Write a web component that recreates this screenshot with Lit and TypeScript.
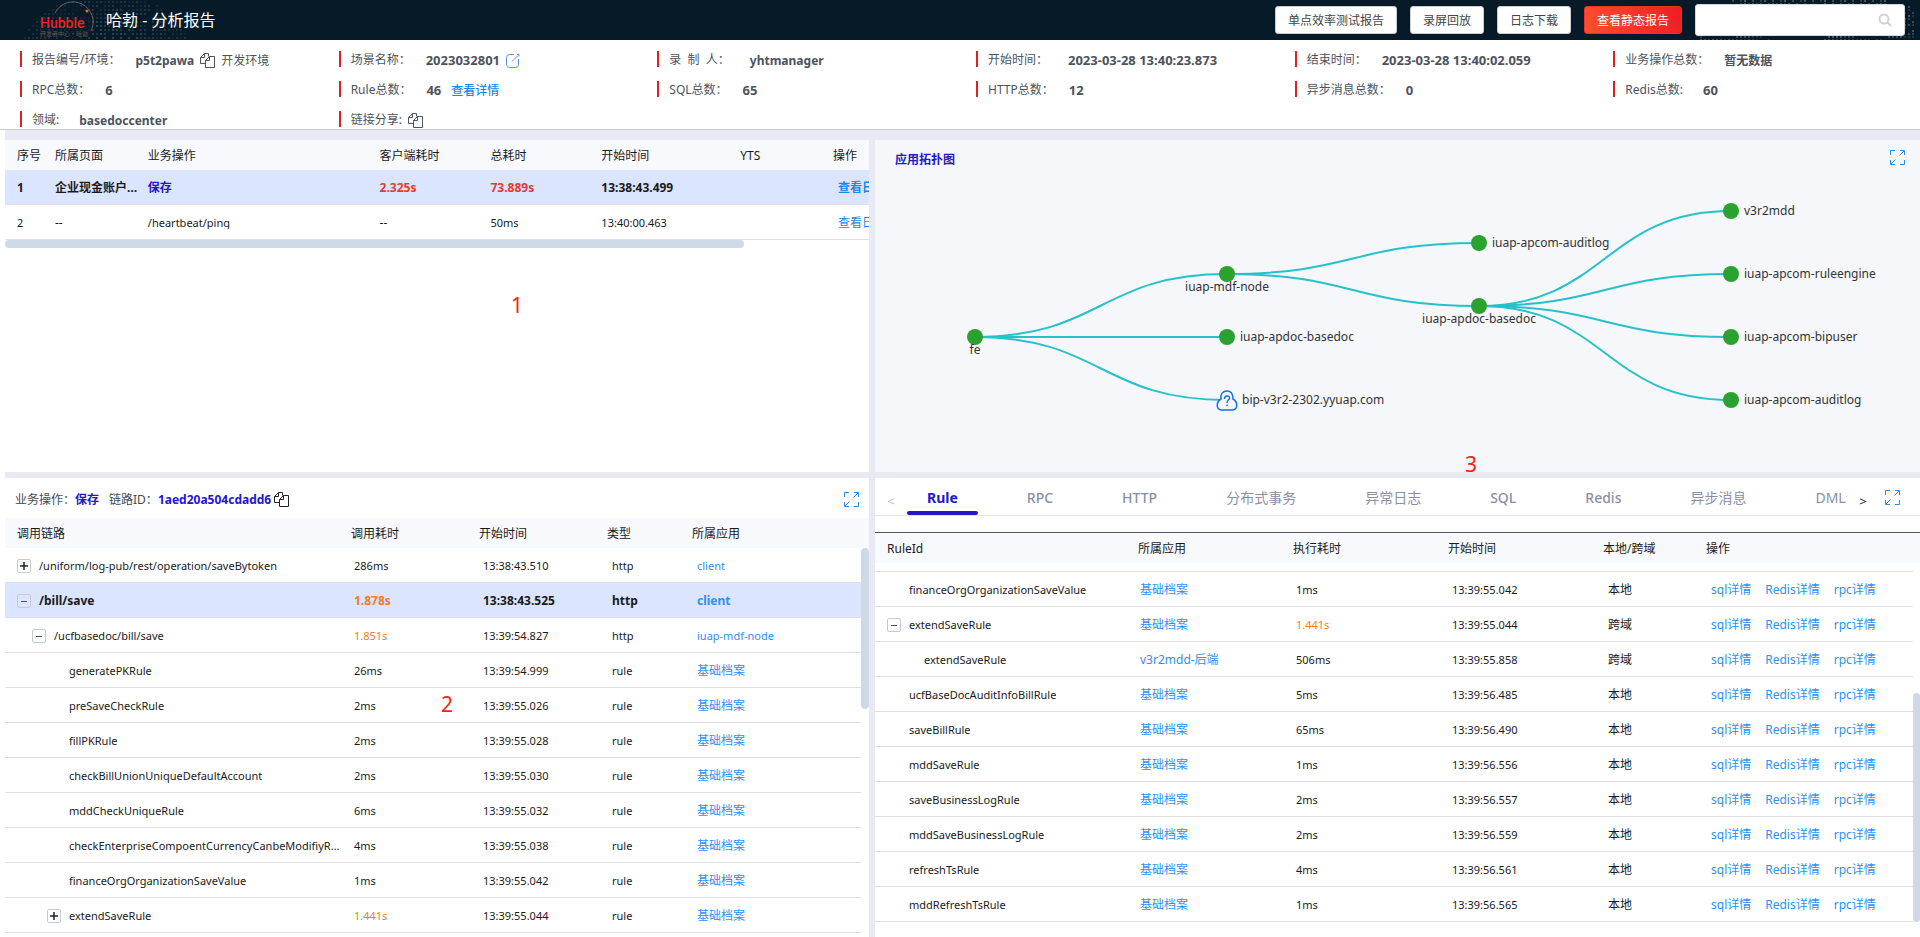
import { LitElement, html, svg, css } from "lit";
import { customElement, state } from "lit/decorators.js";
import { classMap } from "lit/directives/class-map.js";

const base = css`
  * { box-sizing: border-box; }
  button, input { font: inherit; color: inherit; margin: 0; padding: 0; border: 0; background: none; }
  button { cursor: pointer; }
  a { color: #2b91f5; text-decoration: none; }
  svg { display: block; flex: none; }
`;

const tableStyles = css`
  table, thead, tbody { display: block; }
  tr { display: grid; }
  th, td {
    min-width: 0;
    padding: 2px 0 0 12px;
    text-align: left;
    font-weight: 400;
    white-space: nowrap;
    overflow: hidden;
    text-overflow: ellipsis;
  }
  thead tr { height: 30px; line-height: 28px; background: #f7f9fd; }
  tbody tr { height: 35px; line-height: 32px; border-bottom: 1px solid #dcdfe3; }
  .latin { font-size: 11px; }
  tr.active { background: #dbe5ff; }
  tr.active td { font-weight: 700; }
  tr.active .latin { font-size: 12px; }
  .slow { color: #f97b1c; }
  .thumb { position: absolute; background: #cdd9e7; border-radius: 4px; }
`;

const copyIcon = () => html`<svg width="15" height="15" viewBox="0 0 15 15" fill="none" stroke="currentColor" stroke-width="1">
  <path d="M5 10.5H.5v-6l4-4h4v3M4.500.5v4h-4" />
  <path d="M5.5 14.500v-7l4-4h5v11zM9.500 3.500v4h-4" />
</svg>`;

const editIcon = () => html`<svg width="14" height="15" viewBox="0 0 14 15" fill="none" stroke="#5b8def" stroke-width="1">
  <path d="M8 1.500H3.500a3 3 0 0 0-3 3v7a3 3 0 0 0 3 3h6a3 3 0 0 0 3-3V6" />
  <path d="M6 8.500L12 2.500" />
  <path d="M11 1.500h2v2" />
</svg>`;

const expandIcon = () => html`<svg width="15" height="15" viewBox="0 0 15 15" fill="none" stroke="#2b8ae6" stroke-width="1">
  <path d="M.5 5V.5H5M14.500 10v4.500H10M9.500 5.500L14 1M10 .5h4.500V5M5.500 9.500L1 14M.5 10v4.500H5" />
</svg>`;

const toggle = (kind: "+" | "-") => html`<button class="toggle" aria-label=${kind === "+" ? "展开" : "收起"}>
  <svg width="12" height="12" viewBox="0 0 12 12" stroke=${kind === "+" ? "#222" : "#4a5260"} stroke-width=${kind === "+" ? 1.5 : 1}>
    <path d=${kind === "+" ? "M2 6h8M6 2v8" : "M3 6.500h6"} />
  </svg>
</button>`;

const treeStyles = css`
  .tree { display: flex; align-items: center; gap: 8px; }
  .tree .name { min-width: 0; overflow: hidden; text-overflow: ellipsis; }
  .toggle {
    display: flex; flex: none; align-items: center; justify-content: center;
    width: 14px; height: 14px; border: 1px solid #c6cbd3; border-radius: 2px;
  }
  .blank { flex: none; width: 14px; }
  .indent1 { padding-left: 27px; }
  .indent2 { padding-left: 42px; }
`;

@customElement("hubble-logo")
class HubbleLogo extends LitElement {
  static styles = css`
    :host { display: block; }
    svg { display: block; }
    .word { font: 500 14px Roboto, sans-serif; fill: #ea2420; }
    .sub { font: 6px "Noto Sans CJK SC", sans-serif; fill: #6b5552; }
  `;
  render() {
    const dots = [];
    for (let y = 1; y < 40; y += 4) {
      for (let x = 20; x < 190; x += 4) {
        const d = Math.hypot((x - 105) / 82, (y - 44) / 50);
        const hole = (x * 7 + y * 13 + ((x * y) % 11)) % 5;
        if (d < 1 && hole > 0) dots.push(svg`<rect x=${x} y=${y} width="2" height="2" opacity=${(0.16 * (1.2 - d) + 0.03 * hole).toFixed(2)} />`);
      }
    }
    return html`<svg width="190" height="40" viewBox="0 0 190 40">
      <g fill="#a9bccb">${dots}</g>
      <circle cx="72" cy="24" r="20" fill="#061a28" fill-opacity=".6" />
      <path d="M55 13a20 20 0 0 1 36 18" fill="none" stroke="#6b6463" stroke-width="1" />
      <circle cx="87" cy="11" r="1.5" fill="#f0642c" />
      <text class="word" x="40" y="28">Hubble</text>
      <text class="sub" x="40" y="36">开发者中心·哈勃</text>
    </svg>`;
  }
}

type GNode = { x: number; y: number; label: string; below?: boolean; cloud?: boolean };
const NODES: GNode[] = [
  { x: 100, y: 197, label: "fe", below: true },
  { x: 352, y: 134, label: "iuap-mdf-node", below: true },
  { x: 352, y: 197, label: "iuap-apdoc-basedoc" },
  { x: 352, y: 260, label: "bip-v3r2-2302.yyuap.com", cloud: true },
  { x: 604, y: 103, label: "iuap-apcom-auditlog" },
  { x: 604, y: 166, label: "iuap-apdoc-basedoc", below: true },
  { x: 856, y: 71, label: "v3r2mdd" },
  { x: 856, y: 134, label: "iuap-apcom-ruleengine" },
  { x: 856, y: 197, label: "iuap-apcom-bipuser" },
  { x: 856, y: 260, label: "iuap-apcom-auditlog" },
];
const EDGES = [[0, 1], [0, 2], [0, 3], [1, 4], [1, 5], [5, 6], [5, 7], [5, 8], [5, 9]];

@customElement("topology-panel")
class TopologyPanel extends LitElement {
  static styles = [base, css`
    :host { display: block; position: relative; background: #f5f7fb; overflow: hidden; }
    .bar { position: absolute; top: 10px; left: 20px; right: 15px; display: flex; justify-content: space-between; align-items: flex-start; }
    h2 { margin: 0; font-size: 12px; line-height: 20px; font-weight: 700; color: #2317c9; }
    .graph { width: 100%; height: 100%; }
    text { font-size: 12px; fill: #333; }
    .mark { position: absolute; left: 590px; bottom: -4px; font-size: 21px; line-height: 24px; color: #ff1e0f; }
  `];
  render() {
    return html`
      <svg class="graph" viewBox="0 0 1045 332" role="img" aria-label="应用拓扑图">
        <g fill="none" stroke="#26c1c9" stroke-width="2">
          ${EDGES.map(([a, b]) => {
            const s = NODES[a], t = NODES[b], m = (s.x + t.x) / 2;
            return svg`<path d="M${s.x} ${s.y}C${m} ${s.y} ${m} ${t.y} ${t.x} ${t.y}" />`;
          })}
        </g>
        ${NODES.map((n) => svg`
          ${n.cloud
            ? svg`<g transform="translate(${n.x} ${n.y})" fill="#f5f7fb" stroke="#1270f5" stroke-width="1.5">
                <path d="M-6 10C-11 9-11 2-6-1C-7-6-4-9 0-9C5-9 6-5 6-1C11 2 11 9 6 10Z" />
                <path fill="none" d="M-2.500 -1C-2.500-5 3-5 2.500-1.500C2 0 0 0 0 3M0 4.500v1.500" />
              </g>`
            : svg`<circle cx=${n.x} cy=${n.y} r="8" fill="#2ba22f" />`}
          ${n.below
            ? svg`<text x=${n.x} y=${n.y + 17} text-anchor="middle">${n.label}</text>`
            : svg`<text x=${n.x + (n.cloud ? 15 : 13)} y=${n.y + 4}>${n.label}</text>`}
        `)}
      </svg>
      <div class="bar"><h2>应用拓扑图</h2><button aria-label="全屏">${expandIcon()}</button></div>
      <span class="mark">3</span>`;
  }
}

@customElement("operations-panel")
class OperationsPanel extends LitElement {
  static styles = [base, tableStyles, css`
    :host { display: block; position: relative; background: #fff; overflow: hidden; }
    table { width: 117%; }
    tr { grid-template-columns: 38fr 97fr 228fr 111fr 111fr 139fr 93fr 195fr; }
    tr .op { padding-left: 8px; }
    tr a { color: #1b87ea; padding-left: 5px; }
    .name { color: #2317c9; }
    .hot { color: #e53935; }
    tr .clip { line-height: 14px; height: 13px; align-self: center; padding-top: 0; }
    .track { position: relative; height: 8px; }
    .thumb { left: 0; top: 0; width: 85.5%; height: 8px; }
    .mark { position: absolute; left: 506px; top: 153px; font-size: 21px; line-height: 24px; color: #ff1e0f; }
  `];
  render() {
    return html`
      <table>
        <thead><tr><th>序号</th><th>所属页面</th><th class="op">业务操作</th><th>客户端耗时</th><th>总耗时</th><th>开始时间</th><th>YTS</th><th>操作</th></tr></thead>
        <tbody>
          <tr class="active"><td>1</td><td>企业现金账户管理</td><td class="op name">保存</td><td class="hot">2.325s</td><td class="hot">73.889s</td><td>13:38:43.499</td><td></td><td><a href="#">查看日志</a></td></tr>
          <tr><td class="latin">2</td><td>--</td><td class="op latin clip">/heartbeat/ping</td><td>--</td><td class="latin">50ms</td><td class="latin">13:40:00.463</td><td></td><td><a href="#">查看日志</a></td></tr>
        </tbody>
      </table>
      <div class="track"><div class="thumb"></div></div>
      <span class="mark">1</span>`;
  }
}

type Call = [string, number, "+" | "-" | "", string, string, string, string];
const CALLS: Call[] = [
  ["/uniform/log-pub/rest/operation/saveBytoken", 0, "+", "286ms", "13:38:43.510", "http", "client"],
  ["/bill/save", 0, "-", "1.878s", "13:38:43.525", "http", "client"],
  ["/ucfbasedoc/bill/save", 1, "-", "1.851s", "13:39:54.827", "http", "iuap-mdf-node"],
  ["generatePKRule", 2, "", "26ms", "13:39:54.999", "rule", "基础档案"],
  ["preSaveCheckRule", 2, "", "2ms", "13:39:55.026", "rule", "基础档案"],
  ["fillPKRule", 2, "", "2ms", "13:39:55.028", "rule", "基础档案"],
  ["checkBillUnionUniqueDefaultAccount", 2, "", "2ms", "13:39:55.030", "rule", "基础档案"],
  ["mddCheckUniqueRule", 2, "", "6ms", "13:39:55.032", "rule", "基础档案"],
  ["checkEnterpriseCompoentCurrencyCanbeModifiyRule", 2, "", "4ms", "13:39:55.038", "rule", "基础档案"],
  ["financeOrgOrganizationSaveValue", 2, "", "1ms", "13:39:55.042", "rule", "基础档案"],
  ["extendSaveRule", 2, "+", "1.441s", "13:39:55.044", "rule", "基础档案"],
];
const isSlow = (t: string) => !t.endsWith("ms");
const isLatin = (t: string) => /^[\x20-\x7e]*$/.test(t);

@customElement("trace-panel")
class TracePanel extends LitElement {
  static styles = [base, tableStyles, treeStyles, css`
    :host { display: block; position: relative; background: #fff; overflow: hidden; }
    .bar { display: flex; align-items: center; height: 40px; padding: 2px 10px 0; color: #444a54; }
    .bar b { color: #2317c9; }
    .bar b + span { margin-left: 10px; }
    .bar .copy { margin-left: 3px; color: #222; }
    .bar .full { margin-left: auto; }
    thead tr { grid-template-columns: 334fr 128fr 128fr 85fr 189fr; }
    tbody { margin-right: 8px; }
    tbody tr { grid-template-columns: minmax(0, 337fr) 129fr 129fr 85fr 176fr; }
    .thumb { right: 0; top: 70px; width: 8px; height: 35%; }
    .mark { position: absolute; left: 436px; top: 214px; font-size: 21px; line-height: 24px; color: #ff1e0f; }
  `];
  render() {
    return html`
      <div class="bar">
        <span>业务操作：</span><b>保存</b><span>链路ID：</span><b>1aed20a504cdadd6</b>
        <button class="copy" aria-label="复制">${copyIcon()}</button>
        <button class="full" aria-label="全屏">${expandIcon()}</button>
      </div>
      <table>
        <thead><tr><th>调用链路</th><th>调用耗时</th><th>开始时间</th><th>类型</th><th>所属应用</th></tr></thead>
        <tbody>
          ${CALLS.map(([name, level, tog, cost, start, type, app], i) => html`
            <tr class=${i === 1 ? "active" : ""}>
              <td class=${classMap({ tree: true, latin: true, indent1: level === 1, indent2: level === 2 })}>
                ${tog ? toggle(tog) : html`<span class="blank"></span>`}<span class="name">${name}</span>
              </td>
              <td class=${classMap({ latin: true, slow: isSlow(cost) })}>${cost}</td>
              <td class="latin">${start}</td><td class="latin">${type}</td>
              <td class=${isLatin(app) ? "latin" : ""}><a href="#">${app}</a></td>
            </tr>`)}
        </tbody>
      </table>
      <div class="thumb"></div>
      <span class="mark">2</span>`;
  }
}

type Rule = [string, number, "-" | "", string, string, string, string];
const RULES: Rule[] = [
  ["financeOrgOrganizationSaveValue", 0, "", "基础档案", "1ms", "13:39:55.042", "本地"],
  ["extendSaveRule", 0, "-", "基础档案", "1.441s", "13:39:55.044", "跨域"],
  ["extendSaveRule", 1, "", "v3r2mdd-后端", "506ms", "13:39:55.858", "跨域"],
  ["ucfBaseDocAuditInfoBillRule", 0, "", "基础档案", "5ms", "13:39:56.485", "本地"],
  ["saveBillRule", 0, "", "基础档案", "65ms", "13:39:56.490", "本地"],
  ["mddSaveRule", 0, "", "基础档案", "1ms", "13:39:56.556", "本地"],
  ["saveBusinessLogRule", 0, "", "基础档案", "2ms", "13:39:56.557", "本地"],
  ["mddSaveBusinessLogRule", 0, "", "基础档案", "2ms", "13:39:56.559", "本地"],
  ["refreshTsRule", 0, "", "基础档案", "4ms", "13:39:56.561", "本地"],
  ["mddRefreshTsRule", 0, "", "基础档案", "1ms", "13:39:56.565", "本地"],
];
const TABS = ["Rule", "RPC", "HTTP", "分布式事务", "异常日志", "SQL", "Redis", "异步消息", "DML语句"];

@customElement("rule-panel")
class RulePanel extends LitElement {
  @state() private active = 0;
  static styles = [base, tableStyles, treeStyles, css`
    :host { display: block; position: relative; background: #fff; overflow: hidden; }
    .bar { display: flex; height: 38px; padding-right: 20px; border-bottom: 1px solid #e4e5ec; }
    .arrow { flex: none; width: 32px; padding-top: 8px; font-size: 13px; color: #222; }
    .arrow:disabled { color: #c0c0c0; }
    .tabs { flex: 1; min-width: 0; display: flex; gap: 29px; overflow: hidden; }
    .tab { position: relative; flex: none; padding: 2px 20px 0; font-size: 14px; line-height: 35px; color: #8990a5; }
    .tab.word { font-weight: 500; }
    .tab.on { color: #2317c9; font-weight: 700; }
    .tab.on::after { content: ""; position: absolute; left: 0; right: 0; bottom: 0; height: 4px; border-radius: 2px; background: #2317c9; }
    .full { padding: 2px 0 0 6px; }
    table { margin-top: 16px; border-top: 1px solid #4d5566; }
    thead tr { grid-template-columns: 251fr 155fr 155fr 155fr 103fr 226fr; }
    tbody { padding-top: 8px; margin-right: 7px; }
    tbody tr { grid-template-columns: minmax(0, 253fr) 156fr 156fr 156fr 103fr 214fr; }
    tbody tr:first-child { height: 36px; border-top: 1px solid #dcdfe3; }
    .links { display: flex; gap: 14px; }
    .thumb { right: 0; bottom: 15px; width: 7px; height: 50%; }
  `];
  render() {
    return html`
      <div class="bar">
        <button class="arrow" disabled aria-label="向前">&lt;</button>
        <div class="tabs" role="tablist">
          ${TABS.map((t, i) => html`<button role="tab" aria-selected=${i === this.active} class=${classMap({ tab: true, word: isLatin(t), on: i === this.active })} @click=${() => (this.active = i)}>${t}</button>`)}
        </div>
        <button class="arrow" aria-label="向后">&gt;</button>
        <button class="full" aria-label="全屏">${expandIcon()}</button>
      </div>
      <table>
        <thead><tr><th>RuleId</th><th>所属应用</th><th>执行耗时</th><th>开始时间</th><th>本地/跨域</th><th>操作</th></tr></thead>
        <tbody>
          ${RULES.map(([name, level, tog, app, cost, start, scope]) => html`
            <tr>
              <td class=${classMap({ tree: true, latin: true, indent1: level === 1 })}>
                ${tog ? toggle(tog) : html`<span class="blank"></span>`}<span class="name">${name}</span>
              </td>
              <td><a href="#">${app}</a></td>
              <td class=${classMap({ latin: true, slow: isSlow(cost) })}>${cost}</td>
              <td class="latin">${start}</td>
              <td>${scope}</td>
              <td class="links"><a href="#">sql详情</a><a href="#">Redis详情</a><a href="#">rpc详情</a></td>
            </tr>`)}
        </tbody>
      </table>
      <div class="thumb"></div>`;
  }
}

@customElement("app-root")
class AppRoot extends LitElement {
  static styles = [base, css`
    :host {
      display: flex; flex-direction: column; height: 100vh; overflow: hidden; background: #fff;
      font-family: "Noto Sans", "Noto Sans CJK SC", sans-serif; font-size: 12px; color: #1a1a1a;
    }
    header { flex: none; position: relative; display: flex; align-items: center; height: 40px; padding-right: 15px; background: #061a28; }
    hubble-logo { margin-right: -84px; }
    h1 { position: relative; margin: 0; font-size: 16px; line-height: 40px; font-weight: 400; color: #fff; }
    .sparks { position: absolute; right: 0; top: 0; }
    .actions { position: relative; margin-left: auto; display: flex; align-items: center; gap: 13px; }
    .btn { height: 28px; padding: 0 12px; border: 1px solid #c9ccd1; border-radius: 3px; background: #fff; color: #444; }
    .btn.primary { border-color: #f2302a; background: linear-gradient(70deg, #ff4f2e, #ee1d23); color: #fff; }
    .search { position: relative; display: block; }
    .search input { display: block; width: 210px; height: 32px; padding: 0 36px 0 10px; border: 1px solid #d5d8dc; border-radius: 3px; background: #fff; outline: 0; color: #333; }
    .search svg { position: absolute; right: 13px; top: 9px; }

    .info { flex: none; display: grid; grid-template-columns: repeat(6, minmax(0, 1fr)); grid-auto-rows: 30px; height: 90px; margin: 0; padding: 5px 4px 0; border-bottom: 1px solid #c9cad2; color: #4d535e; overflow: hidden; }
    .info > div { display: flex; align-items: center; padding-left: 28px; position: relative; white-space: nowrap; }
    .info > div::before { content: ""; position: absolute; left: 16px; top: 6px; width: 2px; height: 16px; background: #e3201f; }
    .info dt { line-height: 30px; }
    .info dd { display: flex; align-items: center; margin: 0 0 0 15px; }
    .info .half { margin-left: 20px; }
    .info .bare { margin-left: 6px; }
    .info .num { font-size: 13px; }
    .info button { margin: 0 6px; }
    .info .bare button { margin: 0; }
    .info a { margin-left: 10px; color: #1b87ea; font-weight: 500; }

    main {
      flex: 1; min-height: 0; display: grid; margin-left: 5px; padding-top: 10px; gap: 6px; background: #e9e9f4;
      grid-template-columns: 45vw minmax(0, 1fr); grid-template-rows: minmax(0, 332fr) minmax(0, 459fr);
    }
  `];

  private field(label: string, value: unknown, cls = "") {
    return html`<div><dt>${label}</dt><dd class=${cls}>${value}</dd></div>`;
  }

  render() {
    const sparks = [];
    for (let y = 0; y < 40; y += 3) {
      for (let x = 5; x < 220; x += 4) {
        const h = (x * 31 + y * 17 + ((x * y) % 23)) % 10;
        const inside = y < 6 ? x > 35 + y * 3 && x < 190 : x < 80 || x > 125;
        if (inside && h > 3) sparks.push(svg`<rect x=${x} y=${y} width="2" height="2" opacity=${(h / 22).toFixed(2)} />`);
      }
    }
    return html`
      <header>
        <hubble-logo></hubble-logo>
        <h1>哈勃 - 分析报告</h1>
        <svg class="sparks" width="225" height="40" fill="#9fb0bd">${sparks}</svg>
        <div class="actions">
          <button class="btn">单点效率测试报告</button>
          <button class="btn">录屏回放</button>
          <button class="btn">日志下载</button>
          <button class="btn primary">查看静态报告</button>
          <label class="search">
            <input type="text" aria-label="搜索" />
            <svg width="14" height="14" viewBox="0 0 14 14" fill="none" stroke="#cfd1d4" stroke-width="2"><circle cx="6" cy="6" r="4.500" /><path d="M9 9l4 4" /></svg>
          </label>
        </div>
      </header>
      <dl class="info">
        ${this.field("报告编号/环境：", html`<b>p5t2pawa</b><button aria-label="复制编号">${copyIcon()}</button>开发环境`)}
        ${this.field("场景名称：", html`<b class="num">2023032801</b><button aria-label="编辑">${editIcon()}</button>`)}
        ${this.field("录\u00a0\u00a0制\u00a0\u00a0人：", html`<b>yhtmanager</b>`, "half")}
        ${this.field("开始时间：", html`<b class="num">2023-03-28 13:40:23.873</b>`, "half")}
        ${this.field("结束时间：", html`<b class="num">2023-03-28 13:40:02.059</b>`)}
        ${this.field("业务操作总数：", html`<b>暂无数据</b>`)}
        ${this.field("RPC总数：", html`<b class="num">6</b>`)}
        ${this.field("Rule总数：", html`<b class="num">46</b><a href="#">查看详情</a>`)}
        ${this.field("SQL总数：", html`<b class="num">65</b>`)}
        ${this.field("HTTP总数：", html`<b class="num">12</b>`)}
        ${this.field("异步消息总数：", html`<b class="num">0</b>`)}
        ${this.field("Redis总数:", html`<b class="num">60</b>`, "half")}
        ${this.field("领域:", html`<b>basedoccenter</b>`, "half")}
        ${this.field("链接分享:", html`<button aria-label="复制链接">${copyIcon()}</button>`, "bare")}
      </dl>
      <main>
        <operations-panel></operations-panel>
        <topology-panel></topology-panel>
        <trace-panel></trace-panel>
        <rule-panel></rule-panel>
      </main>`;
  }
}
